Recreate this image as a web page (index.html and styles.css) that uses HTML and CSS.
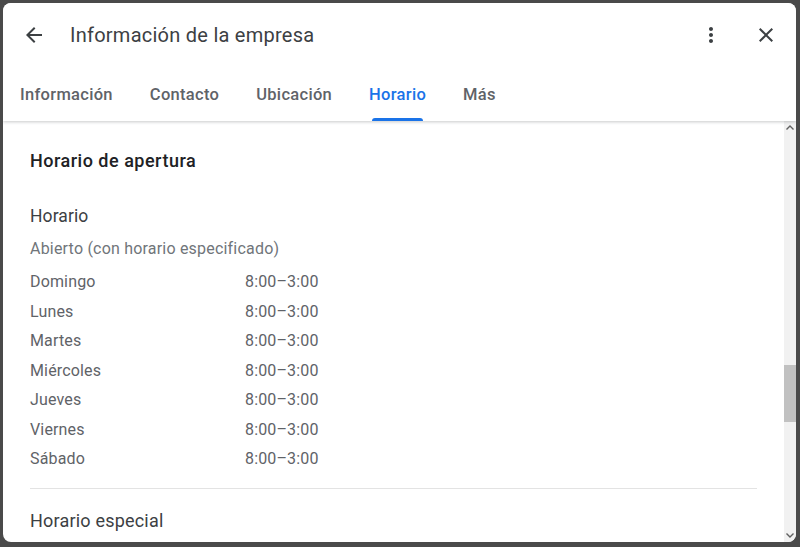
FILE: index.html
```html
<!DOCTYPE html>
<html lang="es">
<head>
<meta charset="utf-8">
<title>Información de la empresa</title>
<link rel="stylesheet" href="styles.css">
</head>
<body>
<div class="dialog">
  <header class="header">
    <div class="toprow">
      <button class="iconbtn back" aria-label="Atrás">
        <svg viewBox="0 0 24 24" width="24" height="24"><path d="M20 11H7.83l5.59-5.59L12 4l-8 8 8 8 1.41-1.41L7.83 13H20v-2z"/></svg>
      </button>
      <h1 class="title">Información de la empresa</h1>
      <button class="iconbtn more" aria-label="Más opciones">
        <svg viewBox="0 0 24 24" width="24" height="24"><path d="M12 8c1.1 0 2-.9 2-2s-.9-2-2-2-2 .9-2 2 .9 2 2 2zm0 2c-1.1 0-2 .9-2 2s.9 2 2 2 2-.9 2-2-.9-2-2-2zm0 6c-1.1 0-2 .9-2 2s.9 2 2 2 2-.9 2-2-.9-2-2-2z"/></svg>
      </button>
      <button class="iconbtn close" aria-label="Cerrar">
        <svg viewBox="0 0 24 24" width="24" height="24"><path d="M19 6.41L17.59 5 12 10.59 6.41 5 5 6.41 10.59 12 5 17.59 6.41 19 12 13.41 17.59 19 19 17.59 13.41 12z"/></svg>
      </button>
    </div>
    <nav class="tabs">
      <div class="tab">Información</div>
      <div class="tab">Contacto</div>
      <div class="tab">Ubicación</div>
      <div class="tab active">Horario</div>
      <div class="tab">Más</div>
    </nav>
  </header>
  <div class="body">
    <div class="content">
      <h2 class="section-title">Horario de apertura</h2>
      <h3 class="sub-title">Horario</h3>
      <p class="status">Abierto (con horario especificado)</p>
      <div class="hours">
        <div class="row"><span class="day">Domingo</span><span class="time">8:00–3:00</span></div>
        <div class="row"><span class="day">Lunes</span><span class="time">8:00–3:00</span></div>
        <div class="row"><span class="day">Martes</span><span class="time">8:00–3:00</span></div>
        <div class="row"><span class="day">Miércoles</span><span class="time">8:00–3:00</span></div>
        <div class="row"><span class="day">Jueves</span><span class="time">8:00–3:00</span></div>
        <div class="row"><span class="day">Viernes</span><span class="time">8:00–3:00</span></div>
        <div class="row"><span class="day">Sábado</span><span class="time">8:00–3:00</span></div>
      </div>
      <hr class="divider">
      <h3 class="sub-title special">Horario especial</h3>
    </div>
    <div class="scrollbar">
      <div class="arrow up"><svg viewBox="0 0 8 5" width="8" height="5"><path d="M0.5 4.5 L4 1 L7.5 4.5" fill="none" stroke="#606060" stroke-width="1.4"/></svg></div>
      <div class="track"><div class="thumb"></div></div>
      <div class="arrow down"><svg viewBox="0 0 8 5" width="8" height="5"><path d="M0.5 0.5 L4 4 L7.5 0.5" fill="none" stroke="#606060" stroke-width="1.4"/></svg></div>
    </div>
  </div>
</div>
</body>
</html>
```

FILE: styles.css
```css
html, body {
  margin: 0;
  padding: 0;
  height: 100%;
}
body {
  background: #4a4a4a;
  font-family: Roboto, "Noto Sans", Arial, sans-serif;
  overflow: hidden;
}
.dialog {
  margin: 3px 4px 0 3px;
  width: 793px;
  height: 539px;
  background: #fff;
  border-radius: 8px;
  overflow: hidden;
  display: flex;
  flex-direction: column;
}
.header {
  position: relative;
  z-index: 2;
  height: 118px;
  flex: none;
  background: #fff;
  box-shadow: 0 1px 3px rgba(60, 64, 67, 0.28);
  display: flex;
  flex-direction: column;
}
.toprow {
  height: 64px;
  display: flex;
  align-items: center;
  padding: 0 9px 0 19px;
}
.iconbtn {
  border: 0;
  background: none;
  padding: 0;
  width: 24px;
  height: 24px;
  display: flex;
  align-items: center;
  justify-content: center;
  fill: #3c4043;
}
.title {
  margin: 0 0 0 24px;
  font-size: 20px;
  font-weight: 400;
  color: #3c4043;
  flex: 1;
  letter-spacing: 0.25px;
}
.more {
  margin-right: 31px;
}
.close {
  margin-right: 9px;
}
.tabs {
  flex: 1;
  display: flex;
}
.tab {
  position: relative;
  padding: 0 18.5px;
  display: flex;
  align-items: center;
  font-size: 16.5px;
  font-weight: 500;
  color: #5f6368;
  letter-spacing: 0.3px;
}
.tab:first-child {
  padding-left: 17px;
}
.tab.active {
  color: #1a73e8;
}
.tab.active::after {
  content: "";
  position: absolute;
  left: 21.5px;
  right: 21.5px;
  bottom: 0;
  height: 3px;
  background: #1a73e8;
  border-radius: 3px 3px 0 0;
}
.body {
  flex: 1;
  display: flex;
  min-height: 0;
}
.content {
  flex: 1;
  padding: 28px 27px 0 27px;
  overflow: hidden;
}
.section-title {
  margin: 0;
  font-size: 18px;
  line-height: 24px;
  font-weight: 500;
  color: #202124;
  letter-spacing: 0.5px;
}
.sub-title {
  margin: 31px 0 0;
  font-size: 17.5px;
  line-height: 24px;
  font-weight: 400;
  color: #3c4043;
  letter-spacing: 0.1px;
}
.status {
  margin: 11px 0 0;
  font-size: 16px;
  line-height: 20px;
  color: #70757a;
  letter-spacing: 0.2px;
}
.hours {
  margin-top: 8px;
}
.row {
  display: flex;
  height: 29.5px;
  line-height: 29.5px;
  font-size: 16px;
  color: #5f6368;
  letter-spacing: 0.15px;
}
.day {
  width: 215px;
}
.divider {
  margin: 14px 0 0;
  border: 0;
  border-top: 1px solid #e3e3e3;
}
.sub-title.special {
  margin-top: 20px;
  font-size: 18px;
  letter-spacing: 0.2px;
}
.scrollbar {
  width: 12px;
  flex: none;
  background: #f1f1f1;
  display: flex;
  flex-direction: column;
}
.arrow {
  height: 13px;
  display: flex;
  align-items: center;
  justify-content: center;
}
.track {
  flex: 1;
  position: relative;
}
.thumb {
  position: absolute;
  left: 0;
  right: 0;
  top: 231px;
  height: 57px;
  background: #c1c1c1;
}
```
